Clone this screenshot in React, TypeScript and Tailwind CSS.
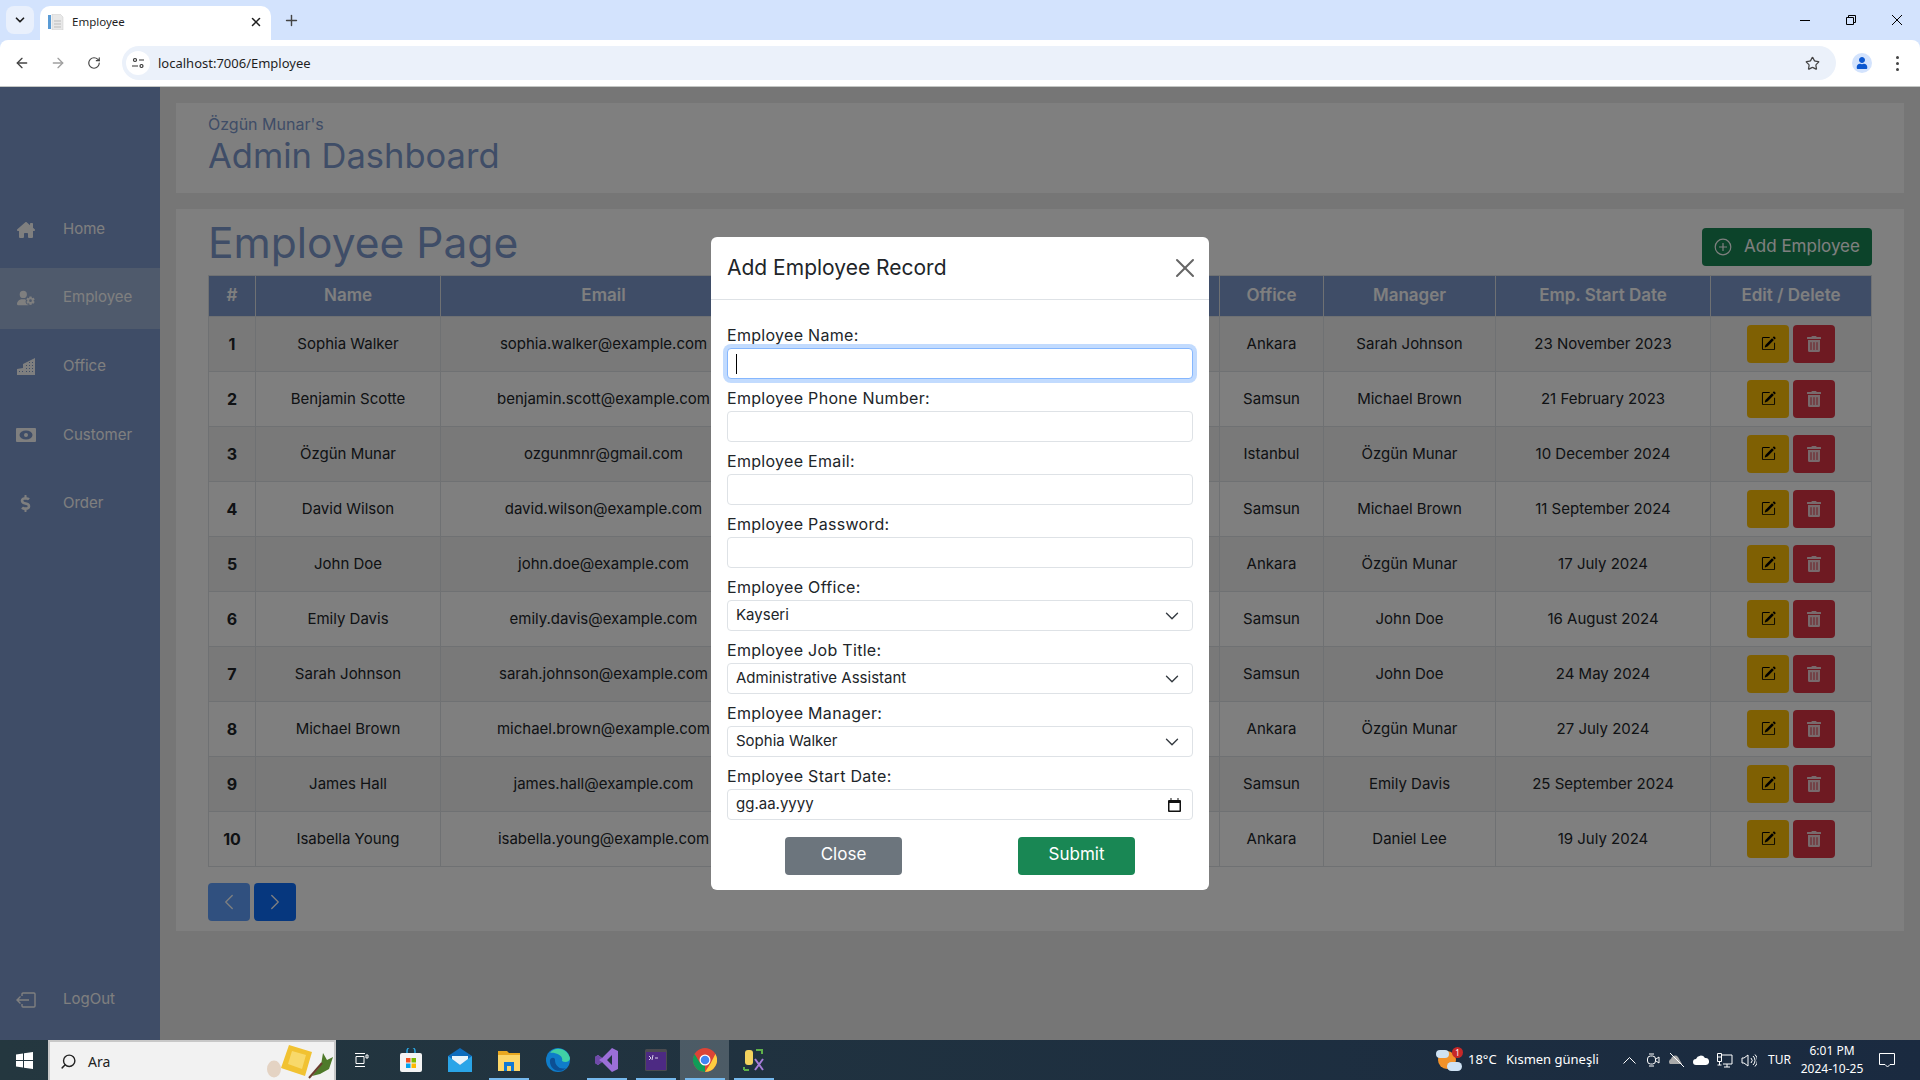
import { ChevronDown, ChevronLeft, ChevronRight, Plus, RotateCw, Star, X, ArrowLeft, ArrowRight, Search } from "lucide-react";
import { BsPencilSquare } from "react-icons/bs";
import { FaDollarSign, FaTrashAlt, FaUser } from "react-icons/fa";
import { FaHouseChimney, FaUserGear } from "react-icons/fa6";

const rows = [
  ["Sophia Walker", "sophia.walker@example.com", "Ankara", "Sarah Johnson", "23 November 2023"],
  ["Benjamin Scotte", "benjamin.scott@example.com", "Samsun", "Michael Brown", "21 February 2023"],
  ["Özgün Munar", "ozgunmnr@gmail.com", "Istanbul", "Özgün Munar", "10 December 2024"],
  ["David Wilson", "david.wilson@example.com", "Samsun", "Michael Brown", "11 September 2024"],
  ["John Doe", "john.doe@example.com", "Ankara", "Özgün Munar", "17 July 2024"],
  ["Emily Davis", "emily.davis@example.com", "Samsun", "John Doe", "16 August 2024"],
  ["Sarah Johnson", "sarah.johnson@example.com", "Samsun", "John Doe", "24 May 2024"],
  ["Michael Brown", "michael.brown@example.com", "Ankara", "Özgün Munar", "27 July 2024"],
  ["James Hall", "james.hall@example.com", "Samsun", "Emily Davis", "25 September 2024"],
  ["Isabella Young", "isabella.young@example.com", "Ankara", "Daniel Lee", "19 July 2024"],
];

function BuildingIcon() {
  return (
    <svg width="18" height="17" viewBox="0 0 18 17" className="fill-white">
      <path d="M0 17v-6l6-1V6l12-6v17z" />
      <path d="M9 7h1v1H9zm3 0h1v1h-1zm3 0h1v1h-1zm-6 3h1v1H9zm3 0h1v1h-1zm3 0h1v1h-1zm-3-6h1v1h-1zm3 0h1v1h-1zM2 13h1v1H2zm3 0h1v1H5zm4 0h1v1H9zm3 0h1v1h-1zm3 0h1v1h-1z" fill="#7e9ace" />
    </svg>
  );
}

function MoneyIcon() {
  return (
    <svg width="20" height="14" viewBox="0 0 20 14">
      <path d="M1 0h18a1 1 0 0 1 1 1v12a1 1 0 0 1-1 1H1a1 1 0 0 1-1-1V1a1 1 0 0 1 1-1zm1.500 2v10h15V2z" fill="white" fillRule="evenodd" />
      <path d="M2 2h16v10H2z" fill="white" />
      <ellipse cx="10" cy="7" rx="6.500" ry="4.500" fill="#7e9ace" />
      <circle cx="10" cy="7" r="2" fill="white" />
    </svg>
  );
}

function LogoutIcon() {
  return (
    <svg width="20" height="16" viewBox="0 0 20 16" fill="none" stroke="white" strokeWidth="1.4">
      <path d="M6 4V2a1 1 0 0 1 1-1h11a1 1 0 0 1 1 1v12a1 1 0 0 1-1 1H7a1 1 0 0 1-1-1v-2" />
      <path d="M13 8H1m3.500-3.500L1 8l3.500 3.500" />
    </svg>
  );
}

function SideItem({ icon, label, active }: { icon: React.ReactNode; label: string; active?: boolean }) {
  return (
    <div className={`flex h-[61px] items-center ${active ? "bg-[#9eb4d8]" : ""}`}>
      <div className="flex w-[63px] justify-center pr-[12px]">{icon}</div>
      <span className="pb-px text-[15px] text-white">{label}</span>
    </div>
  );
}

function Field({ label, children, focus }: { label: string; children?: React.ReactNode; focus?: boolean }) {
  return (
    <div>
      <div className="flex h-[32px] items-end pb-px text-[16px] leading-[24px] tracking-[0.3px] text-[#212529]">{label}</div>
      <div
        className={`flex h-[31px] items-center justify-between rounded-[4px] border bg-white pl-2 pr-[9px] text-[15px] text-[#212529] ${
          focus ? "border-[#86b7fe] ring-4 ring-[#0d6efd]/25" : "border-[#dee2e6]"
        }`}
      >
        {children}
      </div>
    </div>
  );
}

function TaskIcon({ children, open, active }: { children: React.ReactNode; open?: boolean; active?: boolean }) {
  return (
    <div className={`relative flex h-10 w-[49px] items-center justify-center ${active ? "bg-white/20" : ""}`}>
      {children}
      {open && <div className="absolute inset-x-0 bottom-0 mx-auto h-[2px] w-[40px] bg-[#76b9ed]" />}
    </div>
  );
}

function BrowserChrome() {
  return (
    <div className="h-[87px] shrink-0 bg-[#d3e3fd]" style={{ fontFamily: "'Noto Sans', sans-serif" }}>
      <div className="flex h-10 items-end">
        <div className="mb-[6px] ml-[6px] flex h-7 w-7 items-center justify-center rounded-lg bg-[#e9f0fc]">
          <ChevronDown size={14} strokeWidth={3} className="text-[#1f1f1f]" />
        </div>
        <div className="ml-[6px] flex h-[34px] w-[231px] items-center rounded-t-[10px] bg-white pb-[3px] pl-2 pr-[8px]">
          <svg width="16" height="16" viewBox="0 0 16 16">
            <rect x="0" y="1" width="3" height="14" fill="#5a9bd5" />
            <path d="M4 0h8l3 3v13H4z" fill="#e8e8e8" stroke="#c8c8c8" strokeWidth=".5" />
            <path d="M6 7h7M6 10h7M6 13h7" stroke="#bbb" />
          </svg>
          <span className="ml-[8px] flex-1 text-[11.500px] text-[#1f1f1f]">Employee</span>
          <X size={14} strokeWidth={2.6} className="text-[#1f1f1f]" />
        </div>
        <div className="mb-[6px] ml-[6px] flex h-7 w-7 items-center justify-center">
          <Plus size={17} strokeWidth={2} className="text-[#444]" />
        </div>
        <div className="mb-[6px] ml-auto flex items-center">
          <div className="flex h-7 w-[46px] items-center justify-center"><div className="h-px w-[10px] bg-black" /></div>
          <div className="flex h-7 w-[46px] items-center justify-center">
            <svg width="10" height="10" viewBox="0 0 10 10" fill="none" stroke="black"><path d="M.5 2.500h7v7h-7zM2.500 2.500v-2h7v7h-2" /></svg>
          </div>
          <div className="flex h-7 w-[46px] items-center justify-center">
            <svg width="10" height="10" viewBox="0 0 10 10" stroke="black"><path d="M0 0l10 10M10 0L0 10" /></svg>
          </div>
        </div>
      </div>
      <div className="flex h-[47px] items-center rounded-t-[8px] border-b border-[#c4c7c5] bg-white">
        <ArrowLeft size={16} strokeWidth={2} className="ml-[14px] text-[#444]" />
        <ArrowRight size={16} strokeWidth={2} className="ml-[20px] text-[#a0a0a0]" />
        <RotateCw size={14} strokeWidth={2} className="ml-[21px] text-[#444]" />
        <div className="ml-[21px] flex h-[34px] w-[1714px] items-center rounded-full bg-[#ebf1fa] pl-[4px]">
          <div className="flex h-6 w-6 items-center justify-center rounded-full bg-white">
            <svg width="12" height="12" viewBox="0 0 12 12" fill="none" stroke="#333" strokeWidth="1.200"><circle cx="3" cy="3" r="1.500" /><path d="M7 3h5M0 9h6" /><circle cx="9.500" cy="9" r="1.500" /></svg>
          </div>
          <span className="ml-[8px] pt-px text-[13px] text-[#1f1f1f]">localhost:7006/Employee</span>
          <Star size={15} strokeWidth={2} className="ml-auto mr-[16px] text-[#444]" />
        </div>
        <div className="ml-[16px] flex h-5 w-5 items-center justify-center rounded-full bg-[#d3e3fd]">
          <FaUser size={12} className="text-[#0b57d0]" />
        </div>
        <div className="ml-[24px] flex flex-col gap-[3px]">
          <div className="h-[3px] w-[3px] rounded-full bg-[#444]" />
          <div className="h-[3px] w-[3px] rounded-full bg-[#444]" />
          <div className="h-[3px] w-[3px] rounded-full bg-[#444]" />
        </div>
      </div>
    </div>
  );
}

function Taskbar() {
  return (
    <div
      className="flex h-10 shrink-0 items-center bg-gradient-to-r from-[#24373f] to-[#1a2a40] text-white"
      style={{ fontFamily: "'Noto Sans', sans-serif" }}
    >
      <div className="flex w-[48px] justify-center">
        <svg width="17" height="17" viewBox="0 0 17 17" fill="white"><path d="M0 2.400 7 1.400V8H0zM8 1.300 17 0v8H8zM0 9h7v6.600L0 14.600zM8 9h9v8L8 15.700z" /></svg>
      </div>
      <div className="flex h-10 w-[288px] items-center border-2 border-b-0 border-[#c8c8c8] bg-[#f2f2f2] pl-[10px] text-[#222]">
        <Search size={17} className="-scale-x-100 text-[#222]" />
        <span className="ml-[11px] text-[14px]">Ara</span>
        <svg width="70" height="38" viewBox="0 0 70 38" className="ml-auto">
          <ellipse cx="10" cy="27" rx="7" ry="8.500" fill="#e4d3c3" />
          <path d="M25 3l23 7-7 24-24-8z" fill="#f1c232" />
          <path d="M28 9l14 4-4 14-14-5z" fill="#f8d96a" />
          <path d="M48 34l9-11 2-12 4 7 6-3-4 12-9 5z" fill="#4f7a2a" />
          <path d="M45 36l13-15" stroke="#6b3d2e" strokeWidth="2" />
        </svg>
      </div>
      <div className="flex pl-px">
        <TaskIcon>
          <svg width="16" height="16" viewBox="0 0 16 16" fill="none" stroke="white"><path d="M1 1.500h10M1 14.500h10M2 4.500h8v7H2zM14 3v3h-2V3z" /></svg>
        </TaskIcon>
        <TaskIcon>
          <svg width="22" height="24" viewBox="0 0 22 24">
            <path d="M7 6V3a4 4 0 0 1 8 0v3" fill="none" stroke="#2aa5e0" strokeWidth="1.500" />
            <rect x="0" y="5" width="22" height="19" rx="2" fill="#f4f4f4" />
            <rect x="6" y="10" width="4.500" height="4.500" fill="#f25022" />
            <rect x="11.500" y="10" width="4.500" height="4.500" fill="#7fba00" />
            <rect x="6" y="15.500" width="4.500" height="4.500" fill="#00a4ef" />
            <rect x="11.500" y="15.500" width="4.500" height="4.500" fill="#ffb900" />
          </svg>
        </TaskIcon>
        <TaskIcon>
          <svg width="24" height="24" viewBox="0 0 24 24">
            <path d="M0 8 12 0l12 8v16H0z" fill="#0f6cbd" />
            <path d="M0 8l12 9 12-9v16H0z" fill="#2aa5e8" />
            <path d="M4 8h16v3l-8 6-8-6z" fill="#e9f3fb" />
          </svg>
        </TaskIcon>
        <TaskIcon open>
          <svg width="22" height="22" viewBox="0 0 22 22">
            <path d="M0 2h9l2 2h11v18H0z" fill="#e9a820" />
            <path d="M0 6h22v16H0z" fill="#fcd669" />
            <path d="M6 22v-9h10v9h-3v-5H9v5z" fill="#0f78d4" />
          </svg>
        </TaskIcon>
        <TaskIcon>
          <svg width="24" height="24" viewBox="0 0 24 24">
            <circle cx="12" cy="12" r="12" fill="#0f7cc9" />
            <path d="M4 5c5-7 17-5 20 5 0 4-5 5-8 3 2-6-8-9-12-8z" fill="#40d0a5" />
            <path d="M9 12c0 6 5 10 11 8-6 6-17 2-16-8 1-3 5-3 5 0z" fill="#0c4f94" />
          </svg>
        </TaskIcon>
        <TaskIcon open>
          <svg width="24" height="24" viewBox="0 0 24 24">
            <path d="M17 0l6 3v18l-6 3L7 14l-4 3-3-2V9l3-2 4 3zM17 7l-5 5 5 5z" fill="#9b6fd8" fillRule="evenodd" />
            <path d="M0 9l3-2 4 3-3 2 3 2-4 3-3-2z" fill="#6f4aa8" />
          </svg>
        </TaskIcon>
        <TaskIcon open>
          <svg width="22" height="22" viewBox="0 0 22 22">
            <rect width="22" height="22" rx="1.500" fill="#4b4b50" />
            <rect x="1" y="3" width="20" height="18" fill="#4d2a83" />
            <path d="M4 7l2 2-2 2M8 6l-1 5M10 9h3" stroke="#d8d0e8" fill="none" />
          </svg>
        </TaskIcon>
        <TaskIcon open active>
          <svg width="24" height="24" viewBox="0 0 24 24">
            <circle cx="12" cy="12" r="12" fill="#db4437" />
            <path d="M12 24a12 12 0 0 1-10.400-18L7 15l5 2z" fill="#0f9d58" />
            <path d="M12 24l5.500-8.500L22.400 6A12 12 0 0 1 12 24z" fill="#ffcd40" />
            <circle cx="12" cy="12" r="5.500" fill="white" />
            <circle cx="12" cy="12" r="4.300" fill="#4285f4" />
          </svg>
        </TaskIcon>
        <TaskIcon open>
          <svg width="24" height="24" viewBox="0 0 24 24" fill="none">
            <rect x="3" y="2" width="8" height="15" rx="3" fill="#f4d35e" />
            <path d="M14 2h6v4M2 22h5M2 22v-3" stroke="#5fb04a" strokeWidth="2" />
            <path d="M13 11l8 11M21 11l-8 11" stroke="#a77cd8" strokeWidth="2" />
          </svg>
        </TaskIcon>
      </div>
      <div className="ml-auto flex h-10 items-center text-[13px]">
        <div className="relative h-6 w-6">
          <div className="absolute left-[2px] top-[3px] h-[18px] w-[18px] rounded-full bg-[#f2922a]" />
          <div className="absolute bottom-[1px] right-[-2px] h-[9px] w-[15px] rounded-full bg-[#cfe2f3]" />
          <div className="absolute left-0 top-[2px] h-[8px] w-[13px] rounded-full bg-[#cfe2f3]" />
          <div className="absolute -top-[1px] right-[-3px] flex h-[11px] w-[11px] items-center justify-center rounded-full bg-[#c62828] text-[8px] leading-none">1</div>
        </div>
        <span className="ml-[8px] w-[38px]">18°C</span>
        <span className="w-[111px]">Kısmen güneşli</span>
        <div className="flex w-[24px] justify-center">
          <svg width="13" height="7" viewBox="0 0 13 7" fill="none" stroke="white"><path d="M.5 6.500l6-6 6 6" /></svg>
        </div>
        <div className="flex w-[24px] justify-center">
          <svg width="13" height="14" viewBox="0 0 13 14" fill="none" stroke="white"><rect x=".5" y="3" width="8" height="8" rx="3" /><path d="M9 6l3-2v6l-3-2M2 1h5M2 13h5" /></svg>
        </div>
        <div className="flex w-[24px] justify-center">
          <svg width="16" height="14" viewBox="0 0 16 14"><path d="M1 11a3 3 0 0 1 1-5 4 4 0 0 1 7-2l4 7z" fill="#aaa" /><path d="M1 0l14 14" stroke="white" /></svg>
        </div>
        <div className="flex w-[23px] justify-center">
          <svg width="16" height="10" viewBox="0 0 16 10" fill="white"><path d="M3 10a3 3 0 0 1 0-6 5 5 0 0 1 9-1 3.500 3.500 0 0 1 1 7z" /></svg>
        </div>
        <div className="flex w-[25px] justify-center">
          <svg width="16" height="15" viewBox="0 0 16 15" fill="none" stroke="white"><path d="M4 2h11v9H6M10 11v3M7 14h6M.5.500h4v8h-4zM.5 4h4M2.500 9v3M.5 12h4" /></svg>
        </div>
        <div className="flex w-[23px] justify-center">
          <svg width="16" height="13" viewBox="0 0 16 13" fill="none" stroke="white"><path d="M1 4h2l4-3v11L3 9H1zM10 4a3.500 3.500 0 0 1 0 5M12 2a6 6 0 0 1 0 9M14 .5a8.500 8.500 0 0 1 0 12" /></svg>
        </div>
        <span className="ml-[8px] w-[21px] text-[12px]">TUR</span>
        <div className="ml-[8px] flex w-[70px] flex-col items-center text-[12px] leading-[18px]">
          <span>6:01 PM</span>
          <span>2024-10-25</span>
        </div>
        <div className="flex w-[40px] justify-center">
          <svg width="16" height="15" viewBox="0 0 16 15" fill="none" stroke="white"><path d="M.5.500h15v11H11l-2.500 2.500L6 11.500H.5z" /></svg>
        </div>
        <div className="w-[13px]" />
      </div>
    </div>
  );
}

function AddEmployeeModal() {
  return (
    <div className="absolute inset-0 flex justify-center bg-black/50 pt-[150px]">
      <div className="h-[653px] w-[498px] rounded-[6px] bg-white">
        <div className="flex h-[63px] items-center justify-between border-b border-[#dee2e6] px-4">
          <h5 className="text-[21px] font-normal text-[#212529]">Add Employee Record</h5>
          <X size={32} strokeWidth={1.5} className="-mr-2 text-[#666]" />
        </div>
        <div className="px-4 pt-4">
          <Field label="Employee Name:" focus>
            <div className="h-5 w-px bg-black" />
          </Field>
          <Field label="Employee Phone Number:" />
          <Field label="Employee Email:" />
          <Field label="Employee Password:" />
          <Field label="Employee Office:">
            Kayseri
            <ChevronDown size={22} strokeWidth={1.5} className="text-[#343a40]" />
          </Field>
          <Field label="Employee Job Title:">
            Administrative Assistant
            <ChevronDown size={22} strokeWidth={1.5} className="text-[#343a40]" />
          </Field>
          <Field label="Employee Manager:">
            Sophia Walker
            <ChevronDown size={22} strokeWidth={1.5} className="text-[#343a40]" />
          </Field>
          <Field label="Employee Start Date:">
            gg.aa.yyyy
            <svg width="13" height="14" viewBox="0 0 13 14" className="mr-[2px]">
              <path d="M1 2h11a1 1 0 0 1 1 1v10a1 1 0 0 1-1 1H1a1 1 0 0 1-1-1V3a1 1 0 0 1 1-1zm.500 3v7.500h10V5z" fill="#111" fillRule="evenodd" />
              <path d="M2.500 0h1v3h-1zM9.500 0h1v3h-1z" fill="#111" />
            </svg>
          </Field>
          <div className="mt-[17px] flex justify-around">
            <button className="h-[38px] w-[117px] rounded-[4px] bg-[#6c757d] pb-[2px] text-[17px] text-white">Close</button>
            <button className="h-[38px] w-[117px] rounded-[4px] bg-[#198754] pb-[2px] text-[17px] text-white">Submit</button>
          </div>
        </div>
      </div>
    </div>
  );
}

export default function App() {
  return (
    <div className="flex h-screen flex-col overflow-hidden" style={{ fontFamily: "Inter, 'Noto Sans', sans-serif" }}>
      <BrowserChrome />
      <div className="relative flex min-h-0 flex-1 bg-[#ececec]">
        <aside className="flex w-[160px] shrink-0 flex-col bg-[#7e9ace] pt-[112px]">
          <div className="flex flex-col gap-[7.600px]">
            <SideItem icon={<FaHouseChimney size={18} className="text-white" />} label="Home" />
            <SideItem active icon={<FaUserGear size={18} className="text-white" />} label="Employee" />
            <SideItem icon={<BuildingIcon />} label="Office" />
            <SideItem icon={<MoneyIcon />} label="Customer" />
            <SideItem icon={<FaDollarSign size={17} className="text-white" />} label="Order" />
          </div>
          <div className="mb-[10px] mt-auto">
            <SideItem icon={<LogoutIcon />} label="LogOut" />
          </div>
        </aside>
        <main className="flex min-w-0 flex-1 flex-col gap-4 px-4 pt-4">
          <div className="h-[90px] bg-white pl-8 pt-[9px]">
            <div className="text-[16px] leading-[24px] text-[#7e9ace]">Özgün Munar's</div>
            <div className="text-[34.500px] leading-[40px] text-[#7e9ace]">Admin Dashboard</div>
          </div>
          <div className="h-[722px] bg-white px-8 pt-[19px]">
            <div className="flex h-[47px] items-start justify-between">
              <h2 className="-mt-[9px] text-[42.500px] leading-[48px] text-[#7e9ace]">Employee Page</h2>
              <button className="flex h-[38px] w-[170px] items-center justify-center gap-[12px] rounded-[4px] bg-[#198754] pb-px text-[17px] text-white">
                <svg width="18" height="18" viewBox="0 0 18 18" fill="none" stroke="white" strokeWidth="1.200">
                  <circle cx="9" cy="9" r="7.800" />
                  <path d="M9 5v8M5 9h8" />
                </svg>
                Add Employee
              </button>
            </div>
            <table className="w-[1663px] table-fixed border-collapse text-center text-[15px] text-[#212529]">
              <colgroup>
                <col className="w-[47px]" />
                <col className="w-[185px]" />
                <col className="w-[326px]" />
                <col className="w-[453px]" />
                <col className="w-[104px]" />
                <col className="w-[172px]" />
                <col className="w-[215px]" />
                <col className="w-[161px]" />
              </colgroup>
              <thead>
                <tr className="h-[41px] bg-[#7e9ace] text-[17px] text-white">
                  {["#", "Name", "Email", "", "Office", "Manager", "Emp. Start Date", "Edit / Delete"].map((h, i) => (
                    <th key={i} className="border border-[#dee2e6] pb-px font-semibold">{h}</th>
                  ))}
                </tr>
              </thead>
              <tbody>
                {rows.map((r, i) => (
                  <tr key={i} className={`h-[55px] ${i % 2 === 0 ? "bg-[#f2f2f2]" : "bg-white"}`}>
                    <td className="border border-[#dee2e6] pb-px text-[16px] font-bold">{i + 1}</td>
                    <td className="border border-[#dee2e6]">{r[0]}</td>
                    <td className="border border-[#dee2e6]">{r[1]}</td>
                    <td className="border border-[#dee2e6]" />
                    <td className="border border-[#dee2e6]">{r[2]}</td>
                    <td className="border border-[#dee2e6]">{r[3]}</td>
                    <td className="border border-[#dee2e6]">{r[4]}</td>
                    <td className="border border-[#dee2e6]">
                      <div className="flex justify-center gap-1">
                        <div className="flex h-[38px] w-[42px] items-center justify-center rounded-[4px] bg-[#ffc107]">
                          <BsPencilSquare size={15} className="-mt-px text-black" />
                        </div>
                        <div className="flex h-[38px] w-[42px] items-center justify-center rounded-[4px] bg-[#dc3545]">
                          <FaTrashAlt size={16} className="text-[#f0d5d8]" />
                        </div>
                      </div>
                    </td>
                  </tr>
                ))}
              </tbody>
            </table>
            <div className="mt-4 flex gap-1">
              <div className="flex h-[38px] w-[42px] items-center justify-center rounded-[4px] bg-[#0d6efd]/65">
                <ChevronLeft size={26} strokeWidth={1.2} className="text-white" />
              </div>
              <div className="flex h-[38px] w-[42px] items-center justify-center rounded-[4px] bg-[#0d6efd]">
                <ChevronRight size={26} strokeWidth={1.2} className="text-white" />
              </div>
            </div>
          </div>
        </main>
        <AddEmployeeModal />
      </div>
      <Taskbar />
    </div>
  );
}
